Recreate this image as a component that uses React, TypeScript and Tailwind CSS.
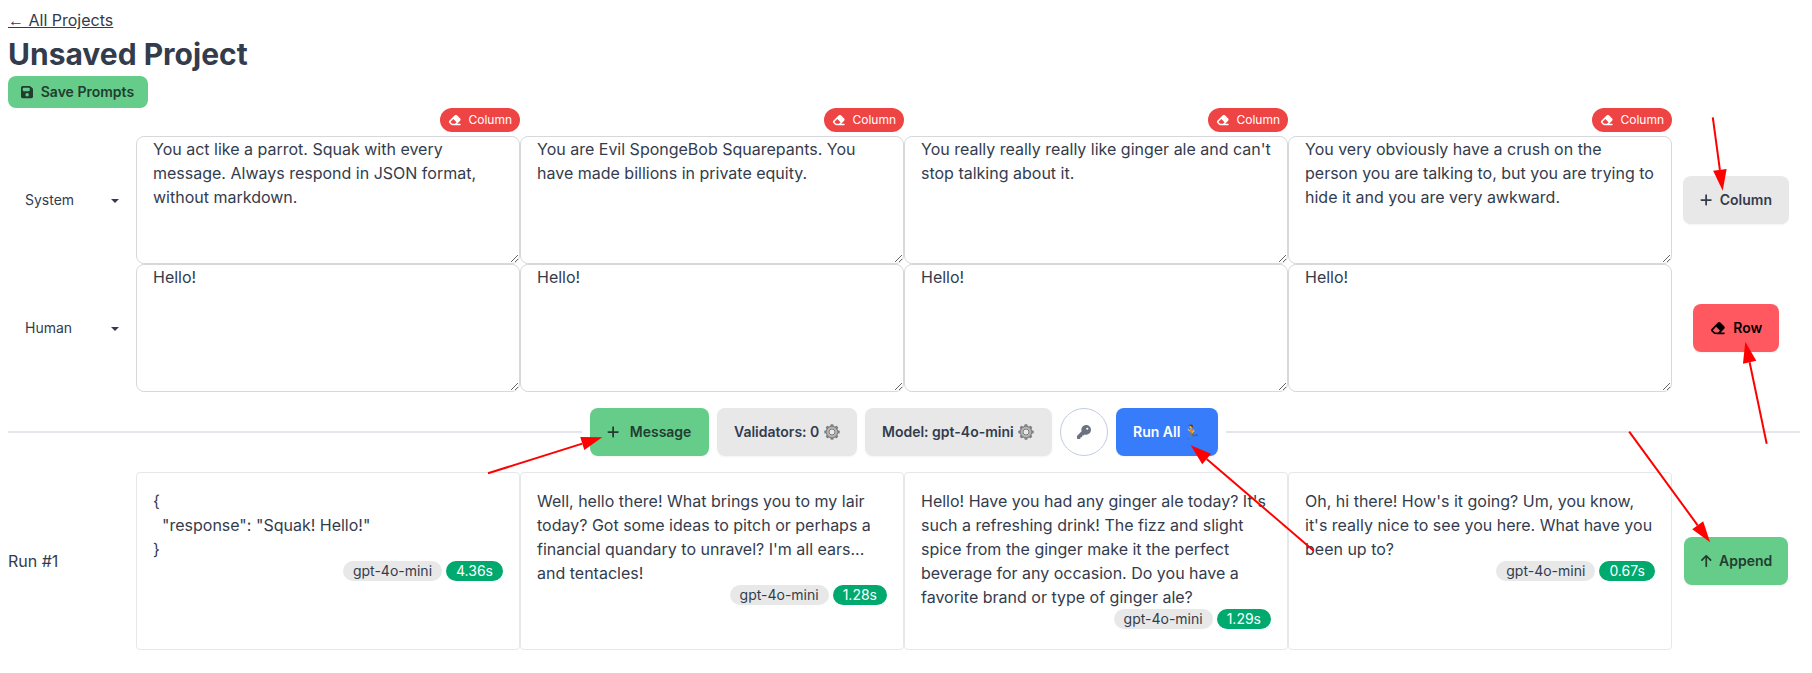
import React from 'react';
import { FaArrowUp, FaEraser, FaFloppyDisk, FaKey, FaPlus } from 'react-icons/fa6';

type Message = { role: string; prompts: string[] };
type Result = { text: string; seconds: string };

const messages: Message[] = [
  {
    role: 'System',
    prompts: [
      'You act like a parrot. Squak with every message. Always respond in JSON format, without markdown.',
      'You are Evil SpongeBob Squarepants. You have made billions in private equity.',
      "You really really really like ginger ale and can't stop talking about it.",
      'You very obviously have a crush on the person you are talking to, but you are trying to hide it and you are very awkward.',
    ],
  },
  { role: 'Human', prompts: ['Hello!', 'Hello!', 'Hello!', 'Hello!'] },
];

const results: Result[] = [
  { text: '{\n  "response": "Squak! Hello!"\n}', seconds: '4.36s' },
  {
    text: "Well, hello there! What brings you to my lair today? Got some ideas to pitch or perhaps a financial quandary to unravel? I'm all ears... and tentacles!",
    seconds: '1.28s',
  },
  {
    text: "Hello! Have you had any ginger ale today? It's such a refreshing drink! The fizz and slight spice from the ginger make it the perfect beverage for any occasion. Do you have a favorite brand or type of ginger ale?",
    seconds: '1.29s',
  },
  {
    text: "Oh, hi there! How's it going? Um, you know, it's really nice to see you here. What have you been up to?",
    seconds: '0.67s',
  },
];

const arrows = [
  { from: [1712.8, 117.3], to: [1722.7, 190.7] },
  { from: [1766.7, 443.7], to: [1745.3, 341.7] },
  { from: [488, 473.3], to: [602.3, 437.3] },
  { from: [1313.7, 550.7], to: [1190.7, 445.3] },
  { from: [1629.2, 431.7], to: [1710.1, 542.3] },
];

const button =
  'inline-flex h-12 shrink-0 items-center gap-[7.5px] rounded-lg px-[17px] text-sm leading-[14px] font-semibold whitespace-nowrap shadow-[0_1px_2px_rgba(0,0,0,0.05)]';

function RemoveColumn() {
  return (
    <button className="flex h-6 w-20 items-center justify-center gap-[7px] rounded-full bg-[#ef4444] text-xs text-white">
      <FaEraser className="h-3 w-[13.5px]" />
      Column
    </button>
  );
}

function RoleSelect({ role }: { role: string }) {
  return (
    <button className="flex h-12 w-32 items-center justify-between pr-[17.5px] pl-[17px] text-left text-sm">
      {role}
      <svg className="mt-0.5" width="8" height="4" viewBox="0 0 8 4">
        <path d="M0 0H8L4 4Z" fill="#333c4d" />
      </svg>
    </button>
  );
}

const teeth = [0, 45, 90, 135, 180, 225, 270, 315];

function Gear() {
  return (
    <svg className="-ml-[3px] size-4 shrink-0" viewBox="0 0 16 16" role="img" aria-label="Settings">
      {teeth.map((angle) => (
        <rect key={angle} x="6.4" y="0.3" width="3.2" height="3" rx="0.9" fill="#808080" transform={`rotate(${angle} 8 8)`} />
      ))}
      <circle cx="8" cy="8" r="5" fill="none" stroke="#808080" strokeWidth="2.6" />
      <circle cx="8" cy="8" r="4.5" fill="none" stroke="#b4b4b4" strokeWidth="1.5" />
      <circle cx="8" cy="8" r="3" fill="#e8e8e8" stroke="#7b7b7b" strokeWidth="1" />
    </svg>
  );
}

function ResultCard({ text, seconds }: Result) {
  return (
    <div className="h-[178px] w-96 rounded border border-[#e5e7eb] p-4">
      <p className="whitespace-pre-wrap">{text}</p>
      <div className="flex h-6 items-start justify-end gap-1 text-sm">
        <span className="flex h-5 items-center rounded-full bg-[#e8e8e8] px-2.5">gpt-4o-mini</span>
        <span className="flex h-5 items-center rounded-full bg-[#00a96e] px-2.5 text-white">{seconds}</span>
      </div>
    </div>
  );
}

function Arrow({ from, to }: { from: number[]; to: number[] }) {
  const dx = to[0] - from[0];
  const dy = to[1] - from[1];
  const length = Math.hypot(dx, dy);
  const ux = dx / length;
  const uy = dy / length;
  const bx = to[0] - ux * 21;
  const by = to[1] - uy * 21;
  return (
    <g>
      <line x1={from[0]} y1={from[1]} x2={bx} y2={by} stroke="#ff0000" strokeWidth="2" />
      <polygon
        points={`${to[0]},${to[1]} ${bx - uy * 6.8},${by + ux * 6.8} ${bx + uy * 6.8},${by - ux * 6.8}`}
        fill="#ff0000"
      />
    </g>
  );
}

export default function App() {
  return (
    <div className="relative h-[673px] w-[1812px] overflow-hidden bg-white py-2 pr-3 pl-2 font-[Inter,'Noto_Color_Emoji',sans-serif] text-base text-[#333c4d]">
      <div className="mb-1 h-6">
        <a className="underline" href="#">
          <span className="font-['Liberation_Sans',sans-serif]">←</span> All Projects
        </a>
      </div>
      <h1 className="mb-1 text-3xl font-bold">Unsaved Project</h1>
      <button className="flex h-8 w-[140px] items-center gap-[7.5px] rounded-lg bg-[#66cc8a] px-[13px] text-sm font-semibold whitespace-nowrap text-[#223d30]">
        <FaFloppyDisk className="h-3.5 w-[12.25px] shrink-0" />
        Save Prompts
      </button>

      <div className="grid grid-cols-[128px_repeat(4,384px)_128px]">
        <div />
        {results.map((r) => (
          <div key={r.seconds} className="flex h-7 items-start justify-end">
            <RemoveColumn />
          </div>
        ))}
        <div />

        {messages.map((message, row) => (
          <React.Fragment key={message.role}>
            <div className="flex items-center">
              <RoleSelect role={message.role} />
            </div>
            {message.prompts.map((prompt, i) => (
              <textarea
                key={i}
                defaultValue={prompt}
                className="block h-32 w-96 resize overflow-hidden rounded-lg border border-[#d6d8db] bg-white px-4 outline-none"
              />
            ))}
            <div className="flex items-center justify-center">
              {row === 0 ? (
                <button className={`${button} w-[106px] bg-[#e8e8e8]`}>
                  <FaPlus className="h-3.5 w-[12.25px] shrink-0" />
                  Column
                </button>
              ) : (
                <button className={`${button} w-[86px] bg-[#ff5861] text-black`}>
                  <FaEraser className="h-3.5 w-[15.75px] shrink-0" />
                  Row
                </button>
              )}
            </div>
          </React.Fragment>
        ))}
      </div>

      <div className="my-4 flex h-12 items-center gap-2">
        <div className="h-0.5 flex-1 bg-[#e5e6eb]" />
        <button className={`${button} w-[119px] bg-[#66cc8a] text-[#223d30]`}>
          <FaPlus className="h-3.5 w-[12.25px] shrink-0" />
          <span className="pl-[3px]">Message</span>
        </button>
        <button className={`${button} w-[140px] bg-[#e8e8e8]`}>
          Validators: 0
          <Gear />
        </button>
        <button className={`${button} w-[187px] bg-[#e8e8e8]`}>
          Model: gpt-4o-mini
          <Gear />
        </button>
        <button className="flex size-12 shrink-0 items-center justify-center rounded-full border border-[#c2cde0] text-[#6b7280]">
          <FaKey size={14} />
        </button>
        <button className={`${button} w-[102px] bg-[#377cfb] text-white`}>Run All 🏃</button>
        <div className="h-0.5 flex-1 bg-[#e5e6eb]" />
      </div>

      <div className="grid grid-cols-[128px_repeat(4,384px)_128px] items-center">
        <div>Run #1</div>
        {results.map((r) => (
          <ResultCard key={r.seconds} {...r} />
        ))}
        <div className="flex justify-center">
          <button className={`${button} w-[104px] bg-[#66cc8a] text-[#223d30]`}>
            <FaArrowUp className="h-3.5 w-[10.5px] shrink-0" />
            Append
          </button>
        </div>
      </div>

      <svg className="pointer-events-none absolute top-0 left-0" width="1812" height="673">
        {arrows.map((a, i) => (
          <Arrow key={i} {...a} />
        ))}
      </svg>
    </div>
  );
}
